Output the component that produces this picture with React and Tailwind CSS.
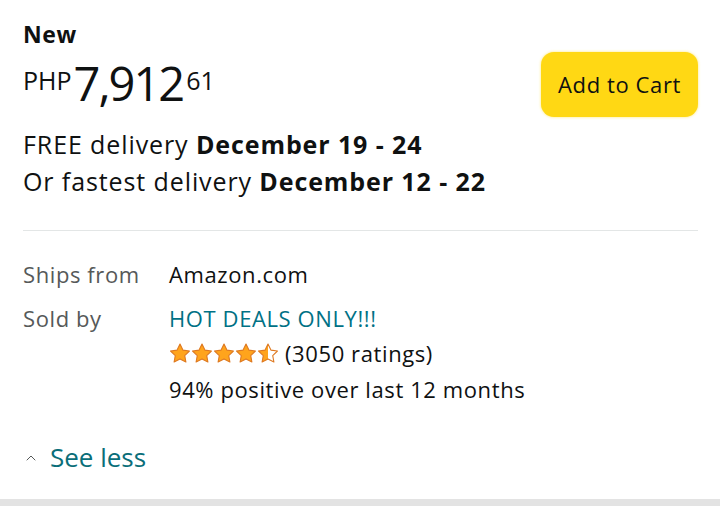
import { ChevronUp } from 'lucide-react'

function Star({ fill = 1 }) {
  // fill: 1 = полная, 0.5 = половина
  const id = fill === 1 ? 'full' : 'half'
  return (
    <svg width="22" height="20" viewBox="0 0 24 22" className="shrink-0">
      <defs>
        <linearGradient id={`g-${id}`} x1="0" x2="1" y1="0" y2="0">
          <stop offset={fill} stopColor="#ffa41c" />
          <stop offset={fill} stopColor="#ffffff" />
        </linearGradient>
      </defs>
      <path
        d="M12 1.2l3.2 6.6 7.2 1-5.2 5 1.3 7.1L12 17.5l-6.5 3.4 1.3-7.1-5.2-5 7.2-1z"
        fill={`url(#g-${id})`}
        stroke="#de7921"
        strokeWidth="1.2"
        strokeLinejoin="round"
      />
    </svg>
  )
}

export default function App() {
  return (
    <div className="w-[720px] h-[523px] bg-white text-[#0f1111] font-['Open_Sans','Noto_Sans',sans-serif] overflow-hidden">
      <div className="pl-[23px] pr-[22px] pt-[18px]">
        {/* Цена и кнопка */}
        <div className="flex justify-between items-start">
          <div>
            <div className="text-[23px] font-bold leading-[32px] tracking-[0.6px]">New</div>
            <div className="flex items-start leading-none mt-[10px]">
              <span className="text-[25px] mt-[8px]">PHP</span>
              <span className="text-[47px] leading-[47px] tracking-[-2px] ml-[2px]">7,912</span>
              <span className="text-[25px] mt-[8px] ml-[3px]">61</span>
            </div>
          </div>
          <button className="mt-[34px] w-[157px] h-[65px] rounded-[13px] bg-[#ffd814] text-[22px] tracking-[0.6px] text-[#0f1111] shadow-[0_0_3px_rgba(255,216,20,0.6)]">
            Add to Cart
          </button>
        </div>

        <div className="mt-[9px] text-[25px] leading-[37px] tracking-[0.9px]">
          <div>
            FREE delivery <span className="font-bold">December 19 - 24</span>
          </div>
          <div>
            Or fastest delivery <span className="font-bold">December 12 - 22</span>
          </div>
        </div>

        <div className="mt-[30px] h-px bg-[#e3e6e6]" />

        {/* Продавец */}
        <div className="mt-[26px] grid grid-cols-[146px_1fr] text-[22px] leading-[34px] tracking-[0.6px]">
          <div className="text-[#565959]">Ships from</div>
          <div>Amazon.com</div>
          <div className="text-[#565959] mt-[10px]">Sold by</div>
          <div className="mt-[10px]">
            <div className="text-[#007185]">HOT DEALS ONLY!!!</div>
            <div className="flex items-center gap-[6px] h-[36px]">
              <div className="flex">
                <Star />
                <Star />
                <Star />
                <Star />
                <Star fill={0.5} />
              </div>
              <span>(3050 ratings)</span>
            </div>
            <div className="leading-[36px]">94% positive over last 12 months</div>
          </div>
        </div>

        <div className="mt-[32px] flex items-center gap-[11px]">
          <ChevronUp size={16} strokeWidth={1.5} className="text-[#565959] mt-[2px]" />
          <span className="text-[26px] text-[#0a6e79] leading-[36px]">See less</span>
        </div>
      </div>
      <div className="mt-[24px] h-[7px] bg-[#e3e3e3]" />
    </div>
  )
}
